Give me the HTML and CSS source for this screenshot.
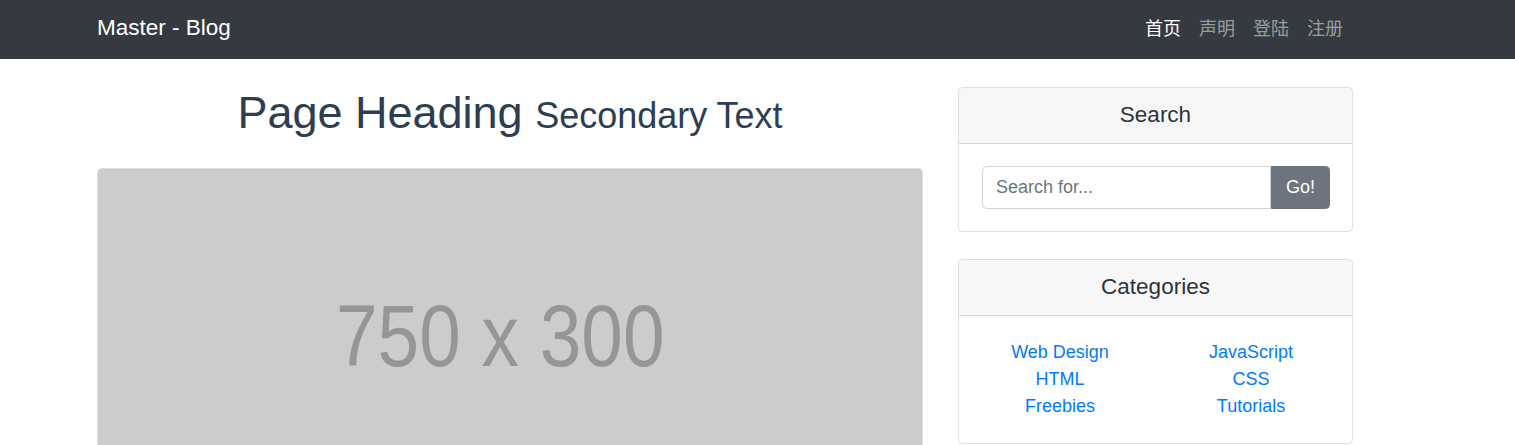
FILE: index.html
```html
<!DOCTYPE html>
<html lang="zh">
<head>
<meta charset="utf-8">
<title>Master - Blog</title>
<link rel="stylesheet" href="styles.css">
</head>
<body>
<nav class="navbar">
  <div class="navbar-inner">
    <a class="brand" href="#">Master - Blog</a>
    <ul class="nav">
      <li><a class="nav-link active" href="#">首页</a></li>
      <li><a class="nav-link" href="#">声明</a></li>
      <li><a class="nav-link" href="#">登陆</a></li>
      <li><a class="nav-link" href="#">注册</a></li>
    </ul>
  </div>
</nav>
<div class="container">
  <main class="main-col">
    <h1 class="page-heading">Page Heading <small>Secondary Text</small></h1>
    <div class="post-card">
      <div class="placeholder"><span class="ph-text">750 x 300</span></div>
    </div>
  </main>
  <aside class="side-col">
    <div class="card">
      <h5 class="card-header">Search</h5>
      <div class="card-body">
        <div class="input-group">
          <input class="form-control" type="text" placeholder="Search for...">
          <button class="btn" type="button">Go!</button>
        </div>
      </div>
    </div>
    <div class="card">
      <h5 class="card-header">Categories</h5>
      <div class="card-body">
        <div class="cat-row">
          <ul class="cat-list">
            <li><a href="#">Web Design</a></li>
            <li><a href="#">HTML</a></li>
            <li><a href="#">Freebies</a></li>
          </ul>
          <ul class="cat-list">
            <li><a href="#">JavaScript</a></li>
            <li><a href="#">CSS</a></li>
            <li><a href="#">Tutorials</a></li>
          </ul>
        </div>
      </div>
    </div>
  </aside>
</div>
</body>
</html>
```
FILE: styles.css
```css
* { box-sizing: border-box; }
html, body { margin: 0; padding: 0; }
body {
  font-family: "Liberation Sans", Arial, "Noto Sans CJK SC", sans-serif;
  font-size: 18px;
  line-height: 1.5;
  color: #212529;
  background: #fff;
  overflow: hidden;
}
a { text-decoration: none; }

.navbar {
  background: #343a40;
  height: 59px;
}
.navbar-inner {
  width: 1255px;
  margin-left: 97px;
  height: 59px;
  padding-bottom: 5px;
  display: flex;
  align-items: center;
  justify-content: space-between;
}
.brand {
  color: #fff;
  font-size: 22.5px;
  line-height: 33px;
}
.nav {
  list-style: none;
  margin: 0;
  padding: 0;
  display: flex;
}
.nav-link {
  display: block;
  padding: 0 9px;
  font-family: "Noto Sans CJK SC", sans-serif;
  font-size: 18px;
  line-height: 27px;
  color: rgba(255, 255, 255, 0.5);
}
.nav-link.active { color: #fff; }

.container {
  width: 1256px;
  margin-left: 97px;
  display: grid;
  grid-template-columns: 826px 395px;
  column-gap: 35px;
}

.page-heading {
  margin: 27px 0 28px;
  font-size: 45px;
  font-weight: 400;
  line-height: 1.2;
  color: #2c3e50;
  text-align: center;
}
.page-heading small { font-size: 36px; }

.post-card {
  border: 1px solid rgba(0, 0, 0, 0.125);
  border-radius: 4.5px;
  overflow: hidden;
}
.placeholder {
  height: 330px;
  background: #cccccc;
  display: flex;
  align-items: center;
  justify-content: center;
  padding-right: 20px;
  padding-top: 4px;
}
.ph-text {
  font-family: "Liberation Sans", Arial, sans-serif;
  font-size: 88px;
  line-height: 1;
  color: #969696;
  transform: scaleX(0.85);
  white-space: nowrap;
}

.side-col { padding-top: 28px; }
.card {
  border: 1px solid rgba(0, 0, 0, 0.125);
  border-radius: 4.5px;
  margin-bottom: 27px;
  overflow: hidden;
}
.card-header {
  margin: 0;
  padding: 12.5px 22.5px 14.5px;
  background: #f7f7f7;
  border-bottom: 1px solid rgba(0, 0, 0, 0.125);
  font-size: 22.5px;
  font-weight: 400;
  line-height: 27.5px;
  text-align: center;
  color: #2a3440;
}
.card-body { padding: 22.5px; }

.input-group { display: flex; }
.form-control {
  flex: 1;
  min-width: 0;
  height: 42.5px;
  padding: 6.75px 13.5px;
  font-family: inherit;
  font-size: 18px;
  color: #495057;
  border: 1px solid #ced4da;
  border-radius: 4.5px 0 0 4.5px;
  outline: none;
}
.form-control::placeholder { color: #6c757d; }
.btn {
  height: 42.5px;
  padding: 6.75px 13.5px;
  font-family: inherit;
  font-size: 18px;
  color: #fff;
  background: #6c757d;
  border: 1px solid #6c757d;
  border-radius: 0 4.5px 4.5px 0;
}

.cat-row {
  display: grid;
  grid-template-columns: 1fr 1fr;
  margin: 1px -17px 0;
}
.cat-list {
  list-style: none;
  margin: 0;
  padding: 0;
  text-align: center;
  line-height: 27px;
}
.cat-list a { color: #007bff; }
```
